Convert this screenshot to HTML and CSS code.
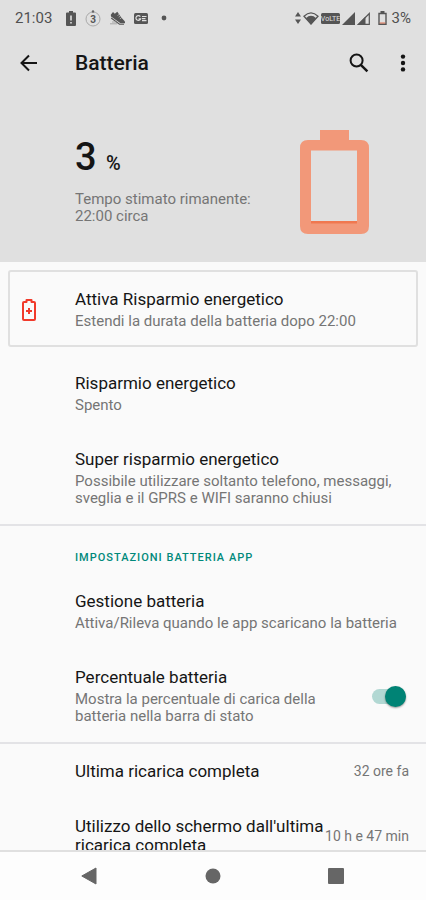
FILE: index.html
```html
<!DOCTYPE html>
<html lang="it">
<head>
<meta charset="utf-8">
<meta name="viewport" content="width=device-width, initial-scale=1">
<title>Batteria</title>
<link rel="stylesheet" href="styles.css">
</head>
<body>
<header class="top">
  <div class="status">
    <span class="clock">21:03</span>
    <div class="notices">
      <svg width="10" height="15" viewBox="0 0 10 15"><path fill="#555" d="M3 0h4v1.500h2q1 0 1 1V14q0 1-1 1H1q-1 0-1-1V2.500q0-1 1-1h2z"/><path fill="#e0e0e0" d="M4.200 4.500h1.600v5H4.200zM4.200 11h1.600v1.600H4.200z"/></svg>
      <svg width="16" height="17" viewBox="0 0 16 17"><circle cx="8" cy="9" r="7" fill="none" stroke="#aaa"/><circle cx="8" cy="1.500" r="1.200" fill="#666"/><text class="badge-number" x="8" y="12.500">3</text></svg>
      <svg width="15" height="14" viewBox="0 0 15 14"><path fill="#555" d="M.8 3.800 3 1 4.800 2.800 7.300.8l4 5.700L14.500 10q.9 1 .3 2.200h-4.300L1 5.500z"/><path fill="none" stroke="#555" stroke-width="1.100" d="m1.200 7 8.300 6.200h4.500"/><path stroke="#e0e0e0" stroke-width=".6" d="m7.500 4.500 1.500-1M8.700 6.200l1.500-1M9.900 7.900l1.500-1"/><path stroke="#999" stroke-width=".8" d="M0 12.800h7M2 11h4"/></svg>
      <svg width="14" height="11" viewBox="0 0 14 11"><rect width="14" height="11" rx="1.500" fill="#555"/><path fill="none" stroke="#e0e0e0" stroke-width="1.200" d="M6.300 3.600A2.400 2.400 0 1 0 6.600 5.800H4.600M8 3.500h4.500M8 5.600h3.500M8 7.700h4.500"/></svg>
      <svg class="dot" width="6" height="6" viewBox="0 0 6 6"><circle cx="3" cy="3" r="2.400" fill="#555"/></svg>
    </div>
    <div class="signals">
      <svg width="6" height="12" viewBox="0 0 6 12"><path fill="#555" d="M3 0 6 4.500H0zM0 7.500h6L3 12z"/></svg>
      <svg width="16" height="13" viewBox="0 0 16 13"><path fill="none" stroke="#555" stroke-width="1.300" d="M1 4.200Q8-2.400 15 4.200L8 12z"/><path fill="#555" d="M2.800 6.200Q8 1.500 13.200 6.200L8 12.500z"/></svg>
      <svg width="19" height="11" viewBox="0 0 19 11"><rect width="19" height="11" rx="1.500" fill="#555"/><text class="volte" x="9.500" y="8">VoLTE</text></svg>
      <svg width="13" height="13" viewBox="0 0 13 13"><path fill="#555" d="M13 0v13H0z"/></svg>
      <svg width="13" height="13" viewBox="0 0 13 13"><path fill="none" stroke="#555" stroke-width="1.200" d="M12.300 1.500v10.900H1.500z"/><path fill="#555" d="M8.500 4.500V13H0z"/></svg>
      <svg class="mini-battery" width="9" height="14" viewBox="0 0 9 14"><path fill="none" stroke="#555" stroke-width="1.400" d="M1 2.500h7v10.700H1z"/><path fill="#555" d="M2.500 0h4v2.500h-4z"/><path fill="#e07050" d="M1.700 11.500h5.600v1H1.700z"/></svg>
      <span>3%</span>
    </div>
  </div>
  <div class="appbar">
    <button class="icon-button" aria-label="Indietro"><svg width="18" height="18" viewBox="0 0 18 18"><path fill="none" stroke="#151515" stroke-width="2" d="M17 9H2M9 1.500 1.500 9 9 16.500"/></svg></button>
    <h1>Batteria</h1>
    <button class="icon-button" aria-label="Cerca"><svg width="20" height="20" viewBox="0 0 20 20"><path fill="none" stroke="#151515" stroke-width="2" d="M13.600 7.500a6 6 0 1 1-12 0 6 6 0 0 1 12 0z"/><path stroke="#151515" stroke-width="2.400" d="m11.800 11.800 6.600 6.600"/></svg></button>
    <button class="icon-button more" aria-label="Altre opzioni"><svg width="6" height="18" viewBox="0 0 6 18"><g fill="#151515"><circle cx="3" cy="2.600" r="2.200"/><circle cx="3" cy="9" r="2.200"/><circle cx="3" cy="15.400" r="2.200"/></g></svg></button>
  </div>
  <section class="hero">
    <div class="reading">
      <p class="level">3 <span>%</span></p>
      <p class="estimate">Tempo stimato rimanente: 22:00 circa</p>
    </div>
    <svg width="69" height="104" viewBox="0 0 69 104"><path fill="#f29879" fill-rule="evenodd" d="M20 0h29v10h12q8 0 8 8v78q0 8-8 8H8q-8 0-8-8V18q0-8 8-8h12zM11 20.500V93h46V20.500z"/><path fill="#f07850" d="M11 91h46v2.500H11z"/></svg>
  </section>
</header>
<main class="content">
  <a class="card" href="#saver">
    <svg width="14" height="22" viewBox="0 0 14 22"><path fill="none" stroke="#f13a2b" stroke-width="2" stroke-linejoin="round" d="M4.500 3V1h5v2H12q1 0 1 1v16q0 1-1 1H2q-1 0-1-1V4q0-1 1-1z"/><path stroke="#f13a2b" stroke-width="2" d="M4 12h6M7 9v6"/></svg>
    <span class="text"><span class="title">Attiva Risparmio energetico</span><span class="summary">Estendi la durata della batteria dopo 22:00</span></span>
  </a>
  <section class="group">
    <a class="row" href="#battery-saver"><span class="text"><span class="title">Risparmio energetico</span><span class="summary">Spento</span></span></a>
    <a class="row" href="#super-saver"><span class="text"><span class="title">Super risparmio energetico</span><span class="summary">Possibile utilizzare soltanto telefono, messaggi, sveglia e il GPRS e WIFI saranno chiusi</span></span></a>
  </section>
  <section class="group">
    <h2>Impostazioni batteria app</h2>
    <a class="row" href="#manage"><span class="text"><span class="title">Gestione batteria</span><span class="summary">Attiva/Rileva quando le app scaricano la batteria</span></span></a>
    <label class="row"><span class="text"><span class="title">Percentuale batteria</span><span class="summary">Mostra la percentuale di carica della batteria nella barra di stato</span></span><input class="switch" type="checkbox" role="switch" checked></label>
  </section>
  <section class="group">
    <div class="row stat"><span class="title">Ultima ricarica completa</span><span class="value">32 ore fa</span></div>
    <div class="row stat"><span class="title">Utilizzo dello schermo dall'ultima ricarica completa</span><span class="value">10 h e 47 min</span></div>
  </section>
</main>
<nav class="navbar">
  <button aria-label="Indietro"><svg width="16" height="18" viewBox="0 0 16 18"><path fill="#666" stroke="#666" stroke-linejoin="round" d="M.8 9 15 1v16z"/></svg></button>
  <button aria-label="Home"><svg width="16" height="16" viewBox="0 0 16 16"><circle cx="8" cy="8" r="7.500" fill="#666"/></svg></button>
  <button aria-label="Recenti"><svg width="16" height="16" viewBox="0 0 16 16"><rect width="16" height="16" rx="1" fill="#666"/></svg></button>
</nav>
</body>
</html>
```
FILE: styles.css
```css
* { box-sizing: border-box; }

body {
  display: flex;
  flex-direction: column;
  height: 100vh;
  margin: 0;
  background: #fafafa;
  color: #151515;
  font-family: Roboto, "Liberation Sans", sans-serif;
}

h1, h2, p { margin: 0; }
svg { display: block; flex: none; }
a { color: inherit; text-decoration: none; }
button { padding: 0; border: 0; background: none; }

.top {
  flex: none;
  padding-bottom: 28px;
  background: #e0e0e0;
}

.status {
  display: flex;
  align-items: center;
  justify-content: space-between;
  height: 36px;
  padding: 0 15px;
  color: #505050;
  font-size: 15px;
}

.notices, .signals { display: flex; align-items: center; }
.notices { flex: 1; gap: 9px; margin-left: 14px; }
.dot { margin-left: 4px; }
.signals { gap: 2px; }
.mini-battery { margin: 0 3px 0 6px; }
.badge-number { fill: #555; font-size: 10px; font-weight: 700; text-anchor: middle; }
.volte { fill: #e0e0e0; font-size: 7px; text-anchor: middle; }

.appbar {
  display: flex;
  align-items: center;
  height: 54px;
  padding: 0 20px;
}

.appbar h1 {
  flex: 1;
  margin-left: 37px;
  font-size: 21px;
  font-weight: 500;
}

.more { margin-left: 31px; }

.hero {
  display: flex;
  align-items: flex-start;
  justify-content: space-between;
  padding: 40px 57px 0 75px;
}

.reading { max-width: 190px; padding-top: 5px; }

.level {
  margin-bottom: 6px;
  font-size: 38px;
  font-weight: 500;
  line-height: 44px;
}

.level span { font-size: 20px; }

.estimate {
  color: #757575;
  font-size: 15px;
  line-height: 17px;
}

.content { flex: 1; min-height: 0; overflow: hidden; }

.card {
  display: flex;
  align-items: center;
  gap: 39px;
  margin: 8px;
  padding: 18px 12px 15px;
  border: 2px solid #e0e0e0;
  border-radius: 3px;
}

.group + .group { border-top: 2px solid #e3e3e6; }

.group h2 {
  padding: 24px 17px 7px 75px;
  color: #00897b;
  font-size: 11px;
  font-weight: 500;
  letter-spacing: 1px;
  line-height: 16px;
  text-transform: uppercase;
}

.row {
  display: flex;
  align-items: center;
  justify-content: space-between;
  padding: 19px 17px 17px 75px;
}

.stat { padding-top: 18px; padding-bottom: 18px; }

.text { display: flex; flex: 1; flex-direction: column; gap: 4px; }
.title { font-size: 17px; line-height: 19px; }
.summary { color: #757575; font-size: 15px; line-height: 17px; }
.value { flex: none; color: #757575; font-size: 14px; line-height: 17px; }

.switch {
  flex: none;
  display: flex;
  align-items: center;
  justify-content: flex-end;
  width: 34px;
  height: 15px;
  margin: 0 3px 0 28px;
  border-radius: 8px;
  background: #b2d8d3;
  appearance: none;
}

.switch::before {
  flex: none;
  width: 21px;
  height: 21px;
  border-radius: 50%;
  background: #008375;
  box-shadow: 0 1px 2px #0006;
  content: "";
}

.switch:not(:checked) { justify-content: flex-start; background: #ccc; }
.switch:not(:checked)::before { background: #f5f5f5; }

.navbar {
  display: flex;
  flex: none;
  align-items: center;
  justify-content: space-between;
  height: 50px;
  padding: 0 82px 0 81px;
  border-top: 2px solid #e0e0e0;
  background: #fdfdfd;
}
```
